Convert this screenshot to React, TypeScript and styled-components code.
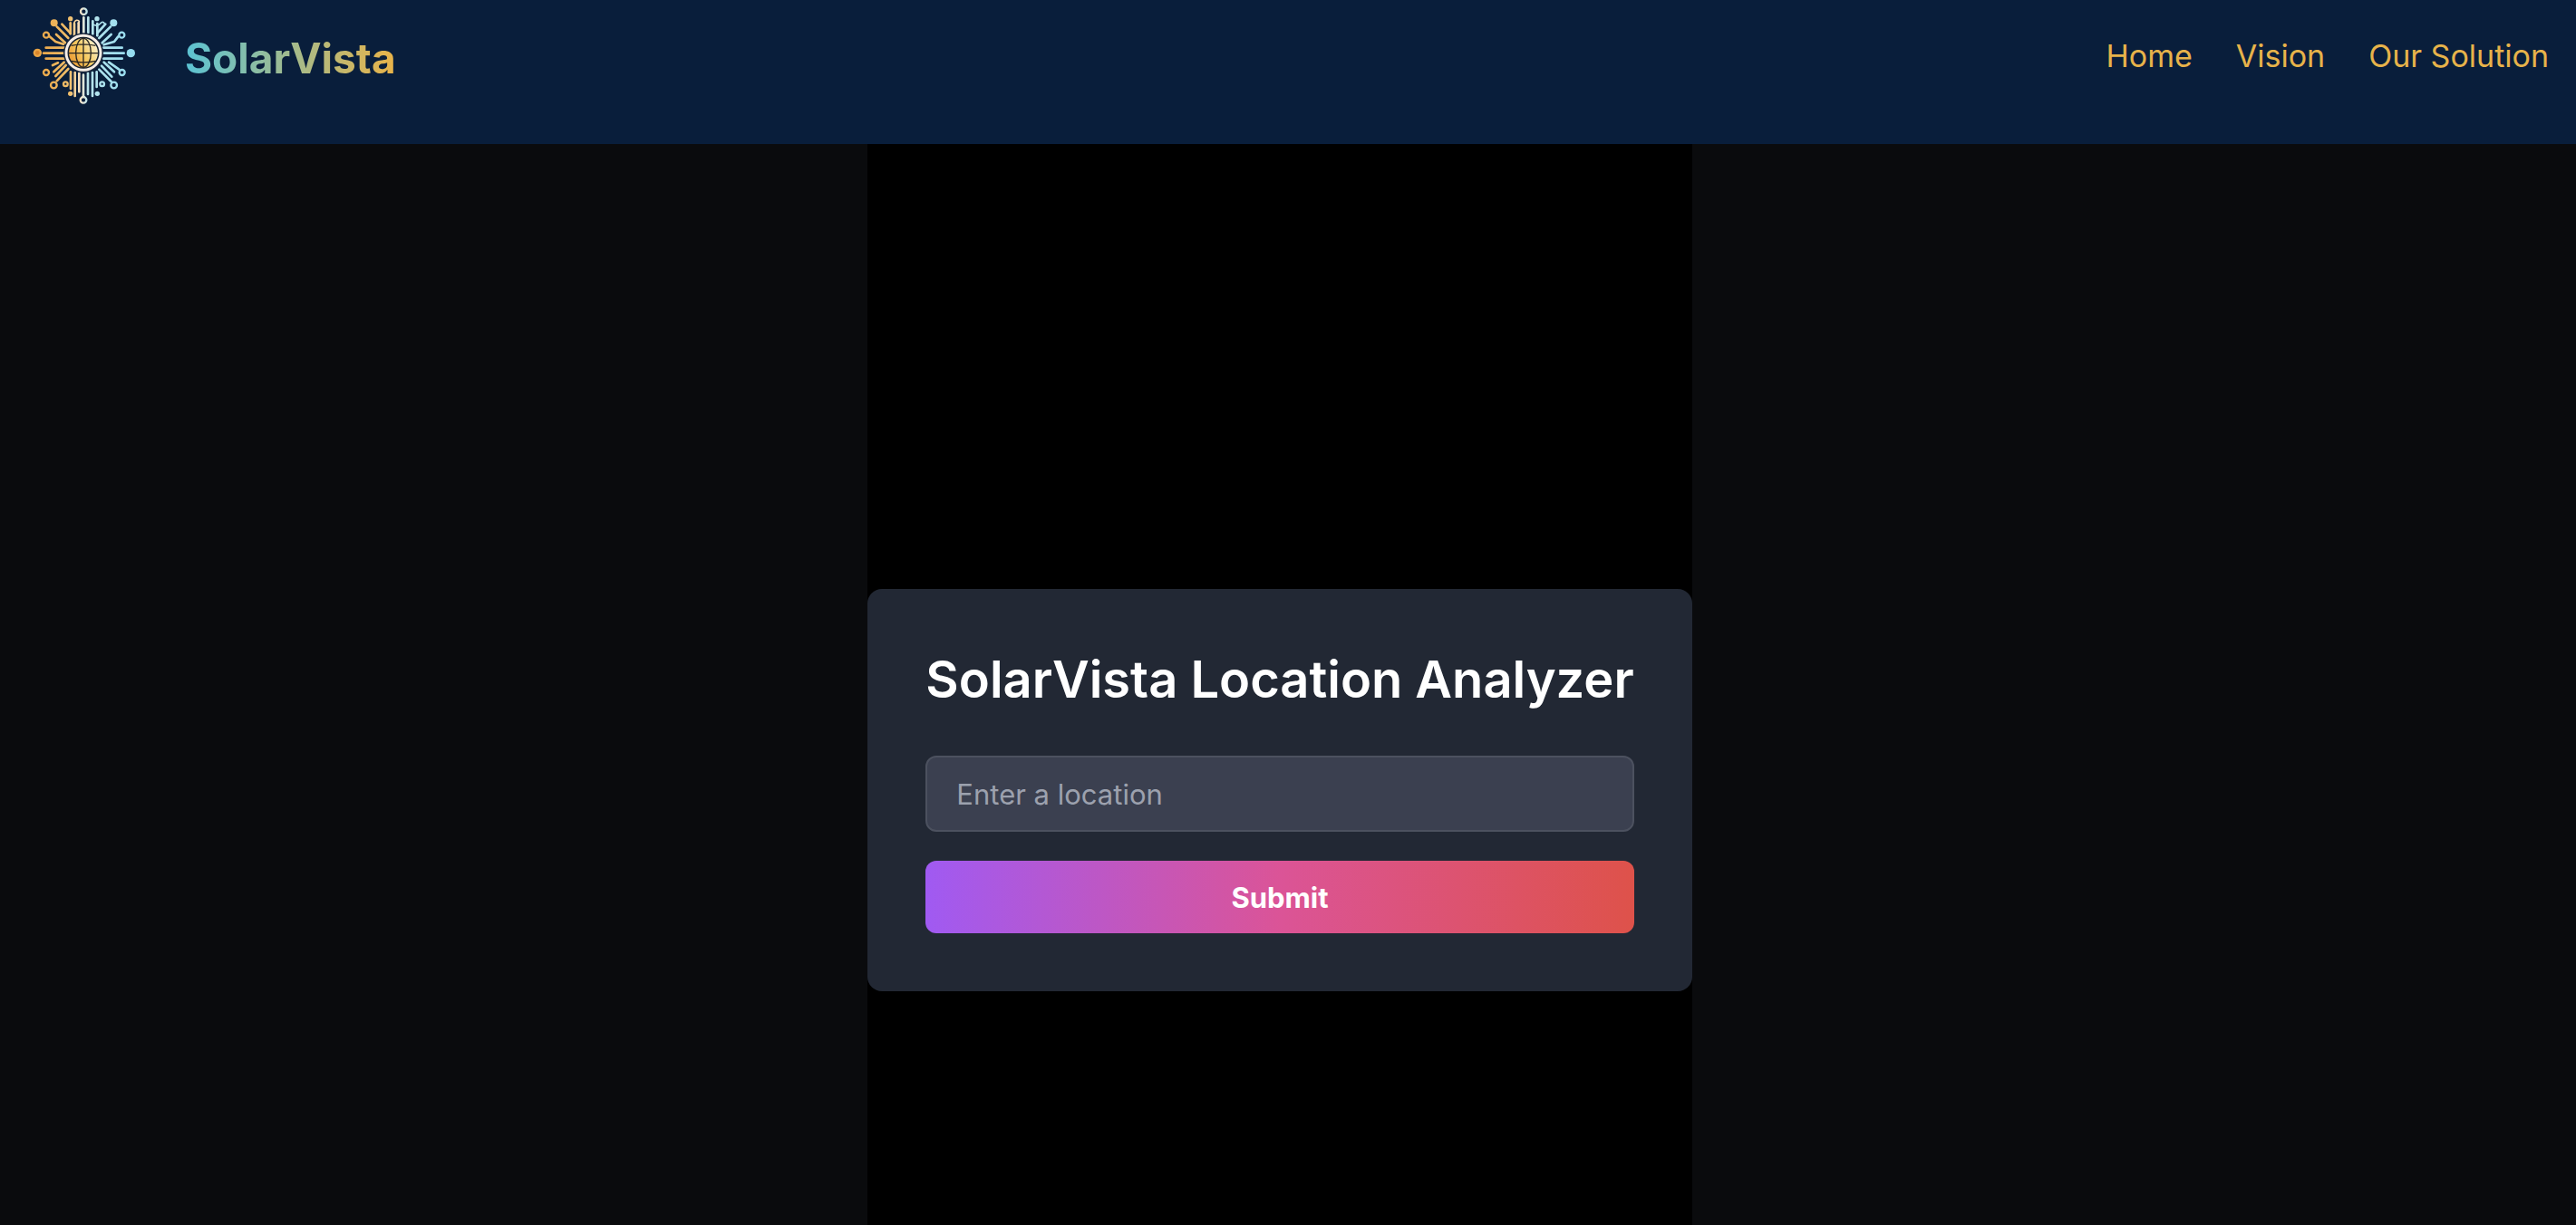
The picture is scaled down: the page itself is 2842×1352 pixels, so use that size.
import React from "react";
import styled, { createGlobalStyle } from "styled-components";

const GlobalStyle = createGlobalStyle`
  *, *::before, *::after { box-sizing: border-box; }
  body {
    margin: 0;
    background: #0a0b0d;
    color: #ffffff;
    font-family: Inter, Roboto, "Liberation Sans", sans-serif;
  }
`;

const Page = styled.div`
  display: flex;
  flex-direction: column;
  height: 100vh;
  overflow: hidden;
`;

const Header = styled.header`
  display: flex;
  flex: none;
  align-items: flex-start;
  justify-content: space-between;
  padding: 4px 30px 35px 32px;
  background: #091e3b;
`;

const Brand = styled.a`
  display: flex;
  align-items: center;
  gap: 52px;
  text-decoration: none;
`;

const Logo = styled.svg`
  display: block;
  width: 120px;
  height: 120px;
`;

const BrandName = styled.span`
  font-size: 46px;
  line-height: 64px;
  font-weight: 700;
  color: transparent;
  background: linear-gradient(to right, #5bc3d4, #e9b348);
  background-clip: text;
  -webkit-background-clip: text;
`;

const Nav = styled.nav`
  display: flex;
  gap: 48px;
  padding-top: 32px;
`;

const NavLink = styled.a`
  color: #e7b34a;
  font-size: 34px;
  line-height: 52px;
  text-decoration: none;
`;

const Main = styled.main`
  display: flex;
  flex: 1 0 auto;
  justify-content: center;
  padding-right: 18px;
`;

const Column = styled.div`
  padding-top: 491px;
  background: #000000;
`;

const Card = styled.form`
  display: flex;
  flex-direction: column;
  padding: 64px;
  border-radius: 16px;
  background: #222834;
`;

const Title = styled.h1`
  margin: 0 0 48px;
  font-size: 56px;
  line-height: 72px;
  font-weight: 600;
  text-align: center;
  white-space: nowrap;
`;

const LocationInput = styled.input`
  width: 100%;
  height: 84px;
  margin-bottom: 32px;
  padding: 0 32px;
  border: 2px solid #4c515f;
  border-radius: 12px;
  background: #3b4050;
  color: #ffffff;
  font: inherit;
  font-size: 31px;
  &::placeholder { color: #9ca1ae; opacity: 1; }
`;

const SubmitButton = styled.button`
  height: 80px;
  border: 0;
  border-radius: 12px;
  background: linear-gradient(to right, #a05af2, #db5497, #de524a);
  color: #ffffff;
  font: inherit;
  font-size: 31px;
  font-weight: 700;
  cursor: pointer;
`;

const rays = [
  "M92 158H155", "M84 176H152", "M92 194H155",
  "M283 158H344", "M284 176H350", "M283 194H344",
  "M217 58V108", "M232 58V108", "M247 70V112", "M262 78V118",
  "M200 76V112", "M186 78V116", "M173 76V112",
  "M174 238V294", "M188 240V318", "M202 242V304", "M216 248V320",
  "M231 242V312", "M246 240V318", "M260 238V288",
  "M145 80L173 110", "M128 88L166 126", "M126 114L156 142", "M104 121L124 138L150 146",
  "M289 80L262 110", "M306 88L268 126", "M308 114L278 142", "M331 121L318 138L284 148",
  "M152 206L118 238", "M158 216L124 252", "M166 228L128 268", "M132 208L114 216",
  "M284 206L318 238", "M276 218L310 254", "M268 230L308 270", "M300 206L334 230",
];

const rings = [
  [217, 38, 10], [216, 331, 10], [93, 116, 9], [343, 116, 9],
  [93, 240, 9], [344, 240, 9], [118, 282, 10], [317, 282, 10],
  [157, 278, 7], [278, 278, 7],
];

const dots = [
  [64, 175, 14], [373, 176, 14], [119, 76, 12], [316, 76, 12],
  [173, 62, 8], [261, 62, 8], [173, 310, 8], [262, 310, 8],
];

function SolarLogo() {
  return (
    <Logo viewBox="36 12 360 360" aria-hidden="true">
      <defs>
        <linearGradient id="rays" gradientUnits="userSpaceOnUse" x1="50" y1="0" x2="388" y2="0">
          <stop offset="0" stopColor="#e9a13f" />
          <stop offset="0.36" stopColor="#f0bf6c" />
          <stop offset="0.47" stopColor="#f6e6cf" />
          <stop offset="0.53" stopColor="#b9e4ec" />
          <stop offset="1" stopColor="#92dcf0" />
        </linearGradient>
        <linearGradient id="globe" x1="0" y1="0.8" x2="1" y2="0.2">
          <stop offset="0" stopColor="#e8952f" />
          <stop offset="0.5" stopColor="#f6cb62" />
          <stop offset="1" stopColor="#fbf3d5" />
        </linearGradient>
        {/* A straight line has an empty bounding box, so the ray gradient uses user space. */}
      </defs>
      <g fill="none" stroke="url(#rays)" strokeWidth="8" strokeLinecap="round" strokeLinejoin="round">
        {rays.map((d) => <path key={d} d={d} />)}
        <path d="M186 74Q192 62 202 70L200 90M248 82Q264 88 272 78T286 78" strokeWidth="5" />
        {rings.map(([cx, cy, r]) => <circle key={`${cx}-${cy}`} cx={cx} cy={cy} r={r} strokeWidth="7" />)}
      </g>
      <g fill="url(#rays)">
        {dots.map(([cx, cy, r]) => <circle key={`${cx}-${cy}`} cx={cx} cy={cy} r={r} />)}
      </g>
      <circle cx="64" cy="175" r="7" fill="#d9852b" />
      <circle cx="216" cy="175" r="66" fill="#1d2a3e" />
      <circle cx="216" cy="175" r="57" fill="#15202f" stroke="#f7eee6" strokeWidth="9" />
      <circle cx="216" cy="175" r="48" fill="url(#globe)" />
      <g fill="none" stroke="#2a2723" strokeWidth="4">
        <path d="M216 127V223M168 176H264M176 151Q216 142 256 151M176 202Q216 211 256 202" />
        <ellipse cx="216" cy="175" rx="25" ry="48" />
      </g>
    </Logo>
  );
}

export default function App() {
  return (
    <>
      <GlobalStyle />
      <Page>
        <Header>
          <Brand href="#">
            <SolarLogo />
            <BrandName>SolarVista</BrandName>
          </Brand>
          <Nav>
            <NavLink href="#home">Home</NavLink>
            <NavLink href="#vision">Vision</NavLink>
            <NavLink href="#solution">Our Solution</NavLink>
          </Nav>
        </Header>
        <Main>
          <Column>
            <Card onSubmit={(event) => event.preventDefault()}>
              <Title>SolarVista Location Analyzer</Title>
              <LocationInput type="text" placeholder="Enter a location" aria-label="Enter a location" />
              <SubmitButton type="submit">Submit</SubmitButton>
            </Card>
          </Column>
        </Main>
      </Page>
    </>
  );
}
